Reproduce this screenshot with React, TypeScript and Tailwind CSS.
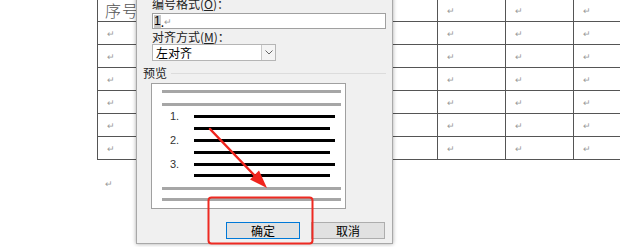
import React from 'react'

// Word numbering dialog over a table, with red annotation
const font = { fontFamily: '"Noto Sans CJK SC", "Microsoft YaHei", sans-serif' }

function Mark() {
  return <span className="text-[9px] leading-none text-[#9a9a9a]">↵</span>
}

function TableGrid() {
  const rows = Array.from({ length: 7 })
  const cols = Array.from({ length: 8 })
  return (
    <div className="ml-[97px] mt-[-1px] flex flex-col">
      <div className="flex flex-col border-l border-[#555]">
        {rows.map((_, r) => (
          <div key={r} className="flex h-[23px] border-b border-[#555]">
            {cols.map((_, c) => (
              <div
                key={c}
                className="flex h-full w-[68px] shrink-0 items-center border-r border-[#555] pl-[9px]"
              >
                {r === 0 && c === 0 ? (
                  <span
                    className="ml-[-2px] text-[16px] leading-none tracking-[1px] text-[#555]"
                    style={{ fontFamily: '"Noto Sans CJK SC", serif', fontWeight: 300 }}
                  >
                    序号
                  </span>
                ) : (
                  <Mark />
                )}
              </div>
            ))}
          </div>
        ))}
      </div>
      <div className="pl-[8px] pt-[9px]">
        <Mark />
      </div>
    </div>
  )
}

function PreviewLine({ gray, short, num, mt }: { gray?: boolean; short?: boolean; num?: string; mt: string }) {
  if (gray) return <div className={`${mt} ml-[10px] mr-[4px] h-[3px] bg-[#a6a6a6]`} />
  return (
    <div className={`${mt} flex h-[3px] items-center`}>
      <span
        className="w-[42px] pl-[18px] text-[11px] leading-none text-[#333]"
        style={{ fontFamily: '"Liberation Sans", Arial, sans-serif' }}
      >
        {num}
      </span>
      <div className={`h-[3px] bg-black ${short ? 'w-[136px]' : 'w-[141px]'}`} />
    </div>
  )
}

function Dialog() {
  return (
    <div
      className="absolute left-[136px] top-[-6px] flex h-[250px] w-[257px] flex-col border border-[#a8a8a8] bg-[#f0f0f0] shadow-[0_0_4px_rgba(0,0,0,0.35)]"
      style={font}
    >
      <div className="ml-[15px] mt-[1px] h-[16px] text-[12px] leading-[16px] text-[#222]">
        编号格式(<span className="underline">O</span>)：
      </div>
      <div className="ml-[15px] mt-[1px] flex h-[16px] w-[234px] items-center border border-[#a0a0a0] bg-white pl-[1px]">
        <span
          className="bg-[#c8c8c8] text-[12px] leading-[13px] text-black"
          style={{ fontFamily: '"Liberation Sans", Arial, sans-serif' }}
        >
          1
        </span>
        <span className="text-[12px] leading-[13px] text-black">.</span>
        <Mark />
      </div>
      <div className="ml-[15px] h-[15px] text-[12px] leading-[15px] text-[#222]">
        对齐方式(<span className="underline">M</span>)：
      </div>
      <div className="ml-[15px] flex h-[17px] w-[124px] items-center border border-[#b5b5b5] bg-white">
        <span className="flex-1 pl-[3px] text-[12px] leading-none text-black">左对齐</span>
        <div className="flex h-full w-[14px] items-center justify-center border-l border-[#c8c8c8] bg-[#f4f4f4]">
          <svg width="8" height="5" viewBox="0 0 8 5">
            <path d="M0.5 0.5 L4 4 L7.5 0.5" fill="none" stroke="#666" strokeWidth="1" />
          </svg>
        </div>
      </div>
      <div className="ml-[6px] mt-[4px] flex h-[16px] items-center gap-[4px] pr-[6px]">
        <span className="text-[12px] leading-none text-[#222]">预览</span>
        <div className="h-px flex-1 bg-[#dcdcdc]" />
      </div>
      <div className="ml-[14px] mt-[2px] flex h-[126px] w-[195px] flex-col border border-[#a0a0a0] bg-white">
        <PreviewLine gray mt="mt-[6px]" />
        <PreviewLine gray mt="mt-[10px]" />
        <PreviewLine num="1." mt="mt-[9px]" />
        <PreviewLine short mt="mt-[9px]" />
        <PreviewLine num="2." mt="mt-[9px]" />
        <PreviewLine short mt="mt-[9px]" />
        <PreviewLine num="3." mt="mt-[9px]" />
        <PreviewLine short mt="mt-[8px]" />
        <PreviewLine gray mt="mt-[10px]" />
        <PreviewLine gray mt="mt-[8px]" />
      </div>
      <div className="mt-[13px] flex justify-end gap-[11px] pr-[7px]">
        <button className="flex h-[17px] w-[74px] items-center justify-center border border-[#0078d7] bg-[#e1e1e1] text-[12px] leading-none text-black">
          确定
        </button>
        <button className="flex h-[17px] w-[74px] items-center justify-center border border-[#adadad] bg-[#e1e1e1] text-[12px] leading-none text-black">
          取消
        </button>
      </div>
    </div>
  )
}

export default function App() {
  return (
    <div className="relative h-[247px] w-[620px] overflow-hidden bg-white">
      <TableGrid />
      <Dialog />
      <svg className="pointer-events-none absolute left-0 top-0" width="620" height="247">
        <rect x="208.5" y="197.5" width="104" height="46" rx="3" fill="none" stroke="#ee2a22" strokeWidth="2" />
        <path d="M210 129 L255.5 176.5" stroke="#f0241d" strokeWidth="2.5" strokeLinecap="round" />
        <polygon points="267,188 250,179.5 259,170.5" fill="#f0241d" />
      </svg>
    </div>
  )
}
